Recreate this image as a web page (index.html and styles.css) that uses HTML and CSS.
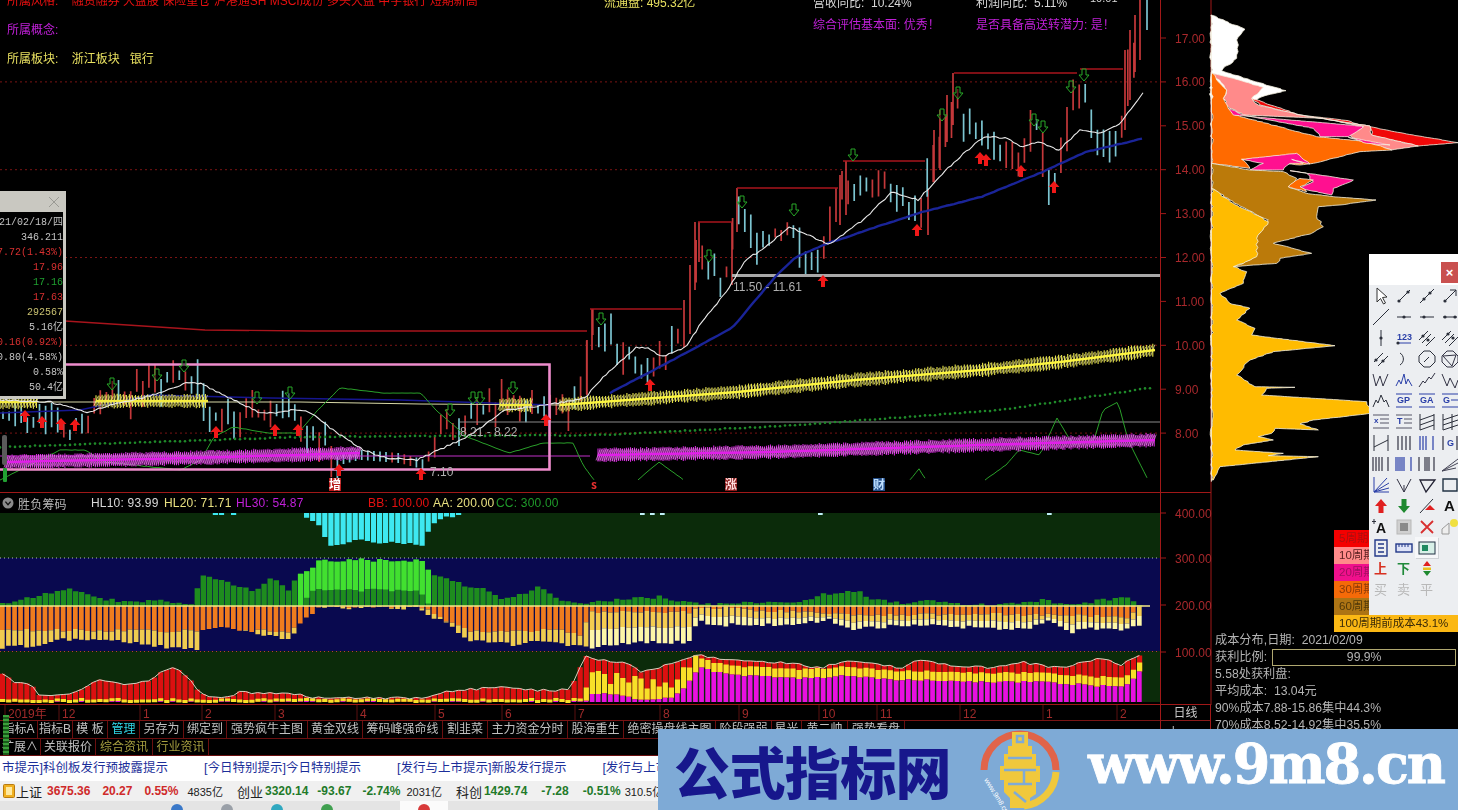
FILE: index.html
```html
<!DOCTYPE html>
<html lang="zh-CN">
<head>
<meta charset="utf-8">
<title>胜负筹码</title>
<link rel="stylesheet" href="styles.css">
</head>
<body>
<div class="screen">
  <div class="desk">
    <main class="charts">
      <section class="price-pane">
        <svg id="price" class="plot" width="1211" height="493"></svg>
        <div class="tags">
          <div class="tag red">所属风格:&nbsp;&nbsp;&nbsp;&nbsp;融资融券 大盘股 保险重仓 沪港通SH MSCI成份 多头大盘 中字银行 短期新高</div>
          <div class="tag purple">所属概念:</div>
          <div class="tag yellow">所属板块:&nbsp;&nbsp;&nbsp;&nbsp;浙江板块&nbsp;&nbsp;&nbsp;银行</div>
        </div>
        <div class="facts">
          <div class="yellow">流通盘: 495.32亿</div>
          <div class="white">营收同比: &nbsp;10.24%</div>
          <div class="white">利润同比: &nbsp;5.11%</div>
          <div class="white fact-up">10.01</div>
          <div></div>
          <div class="purple">综合评估基本面: 优秀！</div>
          <div class="purple">是否具备高送转潜力: 是！</div>
          <div></div>
        </div>
        <div class="quote">
          <div class="quote-title"><svg width="12" height="12" viewBox="0 0 12 12"><path d="M1 1L11 11M11 1L1 11" class="quote-x"/></svg></div>
          <div class="quote-body">
            <div>21/02/18/四</div>
            <div>346.211</div>
            <div class="q-red">7.72(1.43%)</div>
            <div class="q-red">17.96</div>
            <div class="q-green">17.16</div>
            <div class="q-red">17.63</div>
            <div class="q-yellow">292567</div>
            <div>5.16亿</div>
            <div class="q-red">0.16(0.92%)</div>
            <div>0.80(4.58%)</div>
            <div>0.58%</div>
            <div>50.4亿</div>
          </div>
        </div>
      </section>
      <section class="ind-pane">
        <div class="ind-head">
          <svg class="ind-dot" width="12" height="12" viewBox="0 0 12 12"><circle cx="6" cy="6" r="5.5" fill="#8a8a8a"/><path d="M3.4 4.6L6 7.6L8.6 4.6" fill="none" stroke="#111" stroke-width="1.4"/></svg>
          <span class="ind-name">胜负筹码</span>
          <span class="val w73 white">HL10: 93.99</span>
          <span class="val w72 yellow-l">HL20: 71.71</span>
          <span class="val w132 purple">HL30: 54.87</span>
          <span class="val w65 red">BB: 100.00</span>
          <span class="val w63 yellow-l">AA: 200.00</span>
          <span class="val green">CC: 300.00</span>
        </div>
        <svg id="ind" class="plot" width="1211" height="192"></svg>
      </section>
      <div class="foot">
        <div class="foot-main">
          <svg id="dates" class="plot" width="1160" height="16"></svg>
          <nav class="tabs">
            <span class="tab t38">指标A</span><span class="tab t35">指标B</span><span class="tab t35">模 板</span><span class="tab t32 cyan">管理</span><span class="tab t44">另存为</span><span class="tab t43">绑定到</span><span class="tab t81">强势疯牛主图</span><span class="tab t55">黄金双线</span><span class="tab t80">筹码峰强命线</span><span class="tab t45">割韭菜</span><span class="tab t80">主力资金分时</span><span class="tab t56">股海重生</span><span class="tab t92">绝密操盘线主图</span><span class="tab t56">阶段强弱</span><span class="tab t30">星光</span><span class="tab t46">黄二帅</span><span class="tab t57">强势看盘</span>
          </nav>
          <nav class="tabs">
            <span class="tab t41">扩展∧</span><span class="tab t55">关联报价</span><span class="tab t57 olive">综合资讯</span><span class="tab t56 olive">行业资讯</span>
          </nav>
        </div>
        <div class="foot-side">
          <div class="period">日线</div>
          <div class="zoom-btns"><span>十</span><span>一</span></div>
        </div>
      </div>
    </main>
    <aside class="side">
      <div class="chips">
        <svg id="chips" class="plot" width="247" height="632"></svg>
        <div class="legend">
          <div class="leg l1"><span class="leg-cut">5周期前成本</span></div>
          <div class="leg l2"><span class="leg-cut">10周期前成本</span></div>
          <div class="leg l3"><span class="leg-cut">20周期前成本</span></div>
          <div class="leg l4"><span class="leg-cut">30周期前成本</span></div>
          <div class="leg l5"><span class="leg-cut">60周期前成本</span></div>
          <div class="leg l6">100周期前成本43.1%</div>
        </div>
        <div class="tools">
          <div class="tools-bar"><div class="tools-close">×</div></div>
          <div id="toolgrid" class="tools-grid"></div>
        </div>
      </div>
      <div class="stats">
        <div>成本分布,日期: &nbsp;2021/02/09</div>
        <div class="profit"><span>获利比例:</span><span class="profit-box">99.9%</span></div>
        <div>5.58处获利盘:</div>
        <div>平均成本: &nbsp;13.04元</div>
        <div>90%成本7.88-15.86集中44.3%</div>
        <div>70%成本8.52-14.92集中35.5%</div>
      </div>
    </aside>
  </div>
  <div class="grip"></div>
  <div class="ticker">
    <span>市提示]科创板发行预披露提示</span>
    <span>[今日特别提示]今日特别提示</span>
    <span>[发行与上市提示]新股发行提示</span>
    <span>[发行与上市提示]新股发行提示</span>
  </div>
  <div class="indices">
    <svg class="idx-icon" width="12" height="14" viewBox="0 0 12 14"><rect x=".5" y=".5" width="11" height="13" rx="1" fill="#f0b020" stroke="#b87a10"/><rect x="3" y="3" width="6" height="8" fill="#ffe9a0"/></svg>
    <span class="name">上证</span>
    <b class="up m5">3675.36</b><b class="up m12">20.27</b><b class="up m12">0.55%</b><span class="amt m9">4835亿</span>
    <span class="name m14">创业</span>
    <b class="dn m2">3320.14</b><b class="dn m9">-93.67</b><b class="dn m11">-2.74%</b><span class="amt m6">2031亿</span>
    <span class="name m14">科创</span>
    <b class="dn m2">1429.74</b><b class="dn m14">-7.28</b><b class="dn m14">-0.51%</b><span class="amt m4">310.5亿</span>
  </div>
  <div class="taskbar">
    <span class="task-dot t-blue"></span><span class="task-dot t-grey"></span><span class="task-dot t-cyan"></span><span class="task-dot t-green"></span>
    <span class="task-white"><span class="task-dot t-red"></span></span>
  </div>
  <div class="banner">
    <div class="brand">公式指标网</div>
    <svg class="logo" width="80" height="80" viewBox="0 0 80 80">
      <path d="M4 40A36 36 0 0 1 76 40" fill="none" stroke="#e0644a" stroke-width="7"/>
      <path d="M76 42A36 36 0 0 1 44 76" fill="none" stroke="#f0c83c" stroke-width="7"/>
      <path d="M32 2H48V16H52V24H56V36H60V52H56V64L50 68V78H30V68L24 62V50H20V36H24V24H28V16H32Z" fill="#f0c83c"/>
      <path d="M37 6H43V12H37ZM28 28H52M24 40H56M28 54H52M34 62L46 72M44 40V54" fill="none" stroke="#7eaad6" stroke-width="2.5"/>
      <text x="0" y="0" transform="translate(4 50) rotate(58)" class="logo-url">www.9m8.cn</text>
    </svg>
    <div class="url">www.9m8.cn</div>
  </div>
</div>
<script src="script.js"></script>
</body>
</html>
```
FILE: styles.css
```css
* { box-sizing: border-box; }
html, body { margin: 0; padding: 0; background: #000; }
body { font-family: "Liberation Sans", "Noto Sans CJK SC", sans-serif; font-size: 12px; overflow: hidden; }
.screen { position: relative; width: 1458px; height: 810px; overflow: hidden; background: #000; display: flex; flex-direction: column; }
.desk { display: flex; height: 756px; flex: none; filter: blur(.35px); }
.charts { width: 1211px; flex: none; display: flex; flex-direction: column; }
.plot { display: block; overflow: visible; }
.price-pane { position: relative; height: 493px; flex: none; }
.red { color: #e81010; }
.purple { color: #c020d8; }
.yellow { color: #e8e060; }
.yellow-l { color: #e8e080; }
.white { color: #d8d8d8; }
.green { color: #1f9a2a; }
.cyan { color: #30d8e8; }
.olive { color: #a8a040; }

.tags { position: absolute; left: 7px; top: -13px; line-height: 29px; font-size: 12px; white-space: nowrap; }
.facts { position: absolute; left: 604px; top: -8px; display: grid; grid-template-columns: 209px 163px 114px 60px; grid-auto-rows: 22px; line-height: 22px; white-space: nowrap; }
.fact-up { margin-top: -5px; font-size: 11px; }

.quote { position: absolute; left: 0; top: 191px; width: 66px; height: 208px; background: #c9c8c1; padding: 0 3px 3px 0; display: flex; flex-direction: column; overflow: hidden; }
.quote-title { height: 21px; flex: none; display: flex; justify-content: flex-end; align-items: center; padding-right: 3px; }
.quote-x { fill: none; stroke: #9a9a94; stroke-width: 1; }
.quote-body { flex: 1; background: #000; display: flex; flex-direction: column; align-items: flex-end; font-family: "Liberation Mono", "Noto Sans CJK SC", monospace; font-size: 10px; line-height: 15px; color: #c4c4c4; white-space: nowrap; padding-top: 3px; }
.q-red { color: #d83030; }
.q-green { color: #1fa030; }
.q-yellow { color: #c8c070; }

.ind-pane { height: 212px; flex: none; display: flex; flex-direction: column; }
.ind-head { height: 20px; flex: none; display: flex; align-items: center; font-size: 12px; letter-spacing: .2px; white-space: nowrap; padding-left: 2px; }
.ind-dot { margin-right: 4px; }
.ind-name { width: 73px; color: #b8b8b8; }
.val { display: block; flex: none; }
.w73 { width: 73px; }
.w72 { width: 72px; }
.w132 { width: 132px; }
.w65 { width: 65px; }
.w63 { width: 63px; }

.foot { display: flex; flex: 1; min-height: 0; }
.foot-main { width: 1160px; flex: none; display: flex; flex-direction: column; }
.foot-side { flex: 1; border-left: 1px solid #a01818; border-right: 1px solid #a01818; }
.period { height: 16px; line-height: 16px; text-align: center; color: #c8c8c8; font-size: 12px; border-bottom: 1px solid #8c1a1a; }
.zoom-btns { display: flex; justify-content: space-around; color: #c8c8c8; font-size: 11px; line-height: 22px; }
.tabs { display: flex; height: 17.5px; flex: none; border-bottom: 1px solid #6a0f0f; font-size: 12px; line-height: 16px; color: #c0c0c0; white-space: nowrap; overflow: hidden; }
.tab { flex: none; text-align: center; border-right: 1px solid #6a0f0f; overflow: hidden; }
.tab.cyan { color: #30d8e8; }
.tab.olive { color: #a8a040; }
.t30 { width: 30px; } .t32 { width: 32px; } .t35 { width: 35px; } .t38 { width: 38px; } .t41 { width: 41px; }
.t43 { width: 43px; } .t44 { width: 44px; } .t45 { width: 45px; } .t46 { width: 46px; } .t55 { width: 55px; }
.t56 { width: 56px; } .t57 { width: 57px; } .t80 { width: 80px; } .t81 { width: 81px; } .t92 { width: 92px; }
.grip { position: absolute; left: 3px; top: 715px; width: 6px; height: 40px; background: repeating-linear-gradient(#3aa03a 0 2px, #1a5a1a 2px 4px); }

.side { width: 247px; flex: none; display: flex; flex-direction: column; }
.chips { position: relative; height: 632px; flex: none; }
.legend { position: absolute; right: 0; top: 530px; width: 124px; display: flex; flex-direction: column; font-size: 11.5px; }
.leg { height: 17px; line-height: 17px; padding-left: 5px; white-space: nowrap; overflow: hidden; }
.leg-cut { display: block; width: 30px; overflow: hidden; }
.l1 { background: #f40000; color: #a81010; }
.l2 { background: #ff8a8a; color: #5a2020; }
.l3 { background: #f0108c; color: #a01060; }
.l4 { background: #f56a08; color: #8a3a08; }
.l5 { background: #ad7414; color: #503808; }
.l6 { background: #fbb814; color: #3a2a08; }
.tools { position: absolute; left: 158px; top: 254px; width: 89px; height: 361px; background: #eceef1; overflow: hidden; }
.tools-bar { height: 31px; background: #fff; padding: 8px 0 0 72px; }
.tools-close { width: 17px; height: 21px; background: #c9504f; color: #fff; text-align: center; font-size: 13px; line-height: 21px; font-weight: bold; }
.tools-grid { display: grid; grid-template-columns: repeat(4, 23px); grid-auto-rows: 21px; width: 92px; }
.tool { display: flex; align-items: center; justify-content: center; font-size: 13px; line-height: 16px; }
.tool svg { display: block; }
.tool.sel { background: #f6f7f9; box-shadow: 1px 1px 0 #cfd2d6; }
.tool-up { color: #d83020; font-weight: bold; }
.tool-dn { color: #1f8a3a; font-weight: bold; }
.tool-off { color: #b8b8b8; }
.stats { flex: 1; padding: 0 0 0 4px; font-size: 12.2px; line-height: 17px; color: #b4b4b4; white-space: nowrap; overflow: hidden; display: flex; flex-direction: column; }
.profit { display: flex; align-items: center; }
.profit-box { margin-left: 5px; width: 184px; height: 17px; line-height: 15px; border: 1px solid #b0a870; text-align: center; }

.ticker { height: 25px; flex: none; background: #fff; color: #1c2f9a; font-size: 12.5px; line-height: 25px; display: flex; gap: 36px; padding-left: 2px; white-space: nowrap; overflow: hidden; }
.indices { height: 20px; flex: none; background: #f0f0f0; display: flex; align-items: center; white-space: nowrap; padding-left: 3px; font-size: 12px; overflow: hidden; }
.idx-icon { flex: none; margin-right: 1px; }
.name { color: #222; font-size: 13px; }
.up { color: #cf2a2a; }
.dn { color: #1f7a2a; }
.amt { color: #222; font-size: 11px; }
.m2 { margin-left: 2px; } .m4 { margin-left: 4px; } .m5 { margin-left: 5px; } .m6 { margin-left: 6px; } .m9 { margin-left: 9px; }
.m11 { margin-left: 11px; } .m12 { margin-left: 12px; } .m14 { margin-left: 14px; }
.taskbar { flex: 1; background: #e4e4e4; display: flex; gap: 38px; padding-left: 171px; padding-top: 3px; overflow: hidden; }
.task-dot { width: 12px; height: 12px; border-radius: 6px; flex: none; }
.task-white { width: 48px; margin-left: 29px; background: #fbfbfb; display: flex; justify-content: center; margin-top: -3px; padding-top: 3px; }
.t-blue { background: #3a78c8; } .t-grey { background: #9aa0a8; } .t-cyan { background: #30a8c0; } .t-green { background: #40a050; } .t-red { background: #d83a3a; }

.banner { position: absolute; left: 658px; top: 729px; width: 800px; height: 81px; background: #7eaad6; display: flex; align-items: center; overflow: hidden; }
.brand { margin-left: 16px; width: 306px; font-family: "Noto Sans CJK SC", sans-serif; font-weight: 900; font-size: 56px; line-height: 81px; color: #17178c; white-space: nowrap; letter-spacing: -.6px; }
.logo { flex: none; }
.logo-url { font-size: 7px; fill: #fff; font-family: "Liberation Sans", sans-serif; }
.url { margin: 0 0 12px 28px; font-family: "DejaVu Serif", serif; font-weight: bold; font-size: 54px; line-height: 60px; color: #fff; white-space: nowrap; letter-spacing: -2px; -webkit-text-stroke: .8px #fff; }

.axis-label { font-size: 12px; fill: #a8282c; font-family: "Liberation Sans", sans-serif; }
.date-label { font-size: 12px; fill: #a02a2a; font-family: "Liberation Sans", "Noto Sans CJK SC", sans-serif; }
.price-note { font-size: 12px; fill: #b0b0b0; font-family: "Liberation Sans", sans-serif; }
.sign { font-size: 12px; font-family: "Noto Sans CJK SC", sans-serif; font-weight: bold; }
.tool-text { font-family: "Liberation Sans", sans-serif; font-weight: bold; }
```
FILE: script.js
```js
(function () {
  var NS = 'http://www.w3.org/2000/svg';
  function el(parent, tag, attrs, text) {
    var n = document.createElementNS(NS, tag);
    for (var k in attrs) n.setAttribute(k, attrs[k]);
    if (text !== undefined) n.textContent = text;
    parent.appendChild(n);
    return n;
  }
  var seed = 20210218;
  function rnd() {
    seed = (seed + 0x6D2B79F5) | 0;
    var t = Math.imul(seed ^ (seed >>> 15), 1 | seed);
    t = (t + Math.imul(t ^ (t >>> 7), 61 | t)) ^ t;
    return ((t ^ (t >>> 14)) >>> 0) / 4294967296;
  }
  function at(pts, x) {
    if (x <= pts[0][0]) return pts[0][1];
    for (var i = 1; i < pts.length; i++) {
      if (x <= pts[i][0]) {
        var a = pts[i - 1], b = pts[i];
        return a[1] + (b[1] - a[1]) * (x - a[0]) / (b[0] - a[0]);
      }
    }
    return pts[pts.length - 1][1];
  }
  function poly(pts) { return 'M' + pts.map(function (p) { return p[0] + ' ' + p[1]; }).join('L'); }
  function smooth(pts, step, noise) {
    var out = [], n = noise === undefined ? .9 : noise;
    for (var x = pts[0][0]; x <= pts[pts.length - 1][0]; x += step) {
      out.push([x, +(at(pts, x) + (rnd() - .5) * n).toFixed(1)]);
    }
    return out;
  }
  var N = 188;
  function X(i) { return 3 + i * 6.08; }

  /* ---------- price pane ---------- */
  var s = document.getElementById('price');
  function Y(p) { return 38 + (17 - p) * 43.9; }
  [16, 14, 12, 10, 8].forEach(function (p) {
    el(s, 'path', { d: 'M0 ' + Y(p) + 'H1160', stroke: '#7a1414', 'stroke-dasharray': '2 3', fill: 'none' });
  });
  el(s, 'path', { d: 'M1160.5 0V493M1211 0V493M0 492.5H1211', stroke: '#a01818', fill: 'none' });
  [17, 16, 15, 14, 13, 12, 11, 10, 9, 8].forEach(function (p) {
    var y = Y(p);
    el(s, 'path', { d: 'M1160 ' + y + 'H1166', stroke: '#a01818' });
    el(s, 'text', { x: 1175, y: y + 4.5, 'class': 'axis-label' }, p.toFixed(2));
  });
  var pricePath = [[0, 412], [37, 420], [70, 430], [90, 420], [100, 395], [130, 392], [170, 380], [190, 372], [200, 405], [210, 420], [240, 415], [270, 410], [300, 420], [320, 440], [340, 460], [360, 455], [400, 458], [425, 465], [440, 430], [480, 410], [520, 400], [545, 410], [580, 400], [592, 330], [600, 330], [620, 350], [645, 375], [665, 360], [684, 335], [698, 250], [712, 270], [725, 285], [737, 215], [745, 220], [755, 235], [770, 240], [790, 225], [800, 255], [820, 262], [838, 200], [850, 185], [870, 190], [885, 180], [905, 200], [915, 215], [925, 205], [935, 150], [945, 120], [955, 100], [965, 120], [980, 145], [1000, 150], [1015, 165], [1025, 150], [1033, 115], [1045, 160], [1052, 195], [1065, 130], [1075, 100], [1085, 100], [1095, 130], [1110, 150], [1123, 125], [1130, 70], [1140, 40], [1146, 20]];
  var stepTop = [[0, 300], [587, 331], [590, 309], [682, 309], [698, 222], [732, 222], [737, 188], [838, 188], [843, 161], [925, 161], [954, 73], [1077, 73], [1080, 69], [1123, 69], [1140, 0], [1150, 0]];
  var redD = '', cyanD = '';
  for (var i = 0; i < N; i++) {
    var x = X(i), c = at(pricePath, x), prev = at(pricePath, x - 6.08);
    var up = c < prev; if (rnd() < .2) up = !up;
    var len = 6 + rnd() * 22 + Math.abs(c - prev) * .8, k = rnd();
    var t = Math.max(c - len * k, at(stepTop, x)), b = c + len * (1 - k);
    if (x > 340 && x < 430) { t = c - 5; b = c + 5; }
    var frag = 'M' + x.toFixed(1) + ' ' + Math.max(0, t).toFixed(1) + 'V' + b.toFixed(1);
    if (up) redD += frag; else cyanD += frag;
  }
  [[587, 340, 395], [592, 309, 350], [684, 300, 345], [690, 265, 310], [695, 222, 290], [699, 222, 262], [732, 222, 285], [737, 188, 232], [840, 175, 225], [846, 161, 215], [928, 190, 235], [934, 130, 182], [940, 110, 170], [947, 95, 142], [953, 73, 125], [1125, 50, 130], [1130, 30, 100], [1135, 15, 72], [1140, 0, 60]].forEach(function (b) {
    redD += 'M' + b[0] + ' ' + b[1] + 'V' + b[2];
  });
  el(s, 'path', { d: redD, stroke: '#c4383a', 'stroke-width': 1.7, fill: 'none' });
  el(s, 'path', { d: cyanD, stroke: '#7cc4d0', 'stroke-width': 1.7, fill: 'none' });
  el(s, 'path', { d: 'M1147 0V30', stroke: '#7cc4d0', 'stroke-width': 1.7 });

  function line(pts, color, w, extra) {
    var a = { d: poly(pts), stroke: color, 'stroke-width': w, fill: 'none', 'stroke-linejoin': 'round' };
    for (var k in extra || {}) a[k] = extra[k];
    return el(s, 'path', a);
  }
  // stepped resistance: flat runs only, the candles fill the rises between them
  [[[65, 321], [205, 330], [310, 331], [430, 331], [587, 331]], [[590, 309], [682, 309]], [[698, 222], [732, 222]], [[737, 188], [838, 188]], [[843, 161], [925, 161]], [[954, 73], [1077, 73]], [[1080, 69], [1123, 69]]].forEach(function (r) {
    line(r, '#a8141c', 1.4);
  });
  // thin guide lines
  line([[0, 402], [300, 402], [420, 404], [560, 405]], '#d8d8a8', 1);
  line([[0, 456], [590, 456]], '#c030c8', 1);
  line([[460, 422], [1160, 422]], '#8a8a8a', 1.2);
  line([[732, 275.5], [1160, 275.5]], '#a8a8a8', 3);
  // blue
  line([[0, 413], [80, 410], [150, 395], [270, 398], [400, 400], [550, 405]], '#161690', 1.6);
  line(smooth([[610, 393], [644, 375], [686, 353], [733, 327], [775, 277], [796, 257], [829, 243], [918, 213], [981, 197], [1040, 173], [1086, 152], [1145, 138]], 4, .6), '#1a2498', 2.4);
  // green dotted
  var dots = smooth([[0, 447], [300, 437], [600, 435], [800, 425], [1000, 410], [1150, 388]], 5);
  dots.forEach(function (p) { el(s, 'circle', { cx: p[0], cy: p[1], r: 1.3, fill: '#1f8a2a' }); });
  // oscillator
  var osc = [
    [[0, 480], [20, 470], [60, 450], [85, 450], [105, 462], [180, 470], [201, 460], [214, 437], [233, 427], [268, 433], [298, 433], [318, 410], [340, 388], [383, 393], [421, 393], [436, 410], [467, 437], [509, 453], [543, 443], [573, 443], [583, 465], [594, 480]],
    [[638, 480], [659, 462], [684, 480]],
    [[910, 480], [919, 469], [926, 480]],
    [[985, 480], [1006, 465], [1019, 450], [1040, 455], [1057, 418], [1073, 445], [1094, 440], [1103, 410], [1118, 402], [1128, 440], [1147, 478]]
  ];
  osc.forEach(function (o) { line(smooth(o, 3, .5), '#2aa02a', 1); });
  // bands of dense tick marks around a bright core
  function band(pts, color, core, pale, gap) {
    var x0 = pts[0][0], x1 = pts[pts.length - 1][0], d = '', d2 = '';
    for (var x = x0; x <= x1; x += gap) {
      var y = at(pts, x), h = 5.5 + rnd() * 2;
      d += 'M' + x.toFixed(1) + ' ' + (y - h).toFixed(1) + 'V' + (y + h).toFixed(1);
      d2 += 'M' + (x - 2).toFixed(1) + ' ' + (y + h - 1).toFixed(1) + 'L' + (x + 2).toFixed(1) + ' ' + (y - h + 1).toFixed(1);
    }
    el(s, 'path', { d: d, stroke: color, 'stroke-width': 1.1, fill: 'none' });
    el(s, 'path', { d: d2, stroke: pale, 'stroke-width': .7, fill: 'none' });
    line(pts, core, 2.6);
  }
  var yPath = [[560, 405], [737, 392], [855, 380], [981, 370], [1060, 362], [1155, 350]];
  var mPath = [[598, 455], [770, 452], [981, 445], [1155, 440]];
  band(yPath, '#e8e448', '#fbf440', '#fff6a0', 3.04);
  band([[96, 401], [208, 401]], '#e8e448', '#f4ec40', '#fff6a0', 3.04);
  band([[0, 402], [37, 402]], '#e8e448', '#f4ec40', '#fff6a0', 3.04);
  band([[500, 405], [532, 405]], '#e8e448', '#f4ec40', '#fff6a0', 3.04);
  band(mPath, '#d428dc', '#e020e8', '#f090f0', 2.03);
  band([[6, 462], [191, 458], [360, 453]], '#d428dc', '#e020e8', '#f090f0', 2.03);
  // white average and highlight box
  line(smooth([[0, 400], [50, 402], [88, 412], [111, 405], [153, 395], [187, 383], [199, 383], [230, 398], [260, 413], [275, 413], [291, 410], [310, 412], [333, 430], [363, 450], [386, 458], [417, 460], [432, 453], [467, 437], [505, 410], [547, 405], [585, 398], [602, 378], [636, 348], [648, 348], [661, 357], [686, 347], [703, 320], [728, 290], [745, 260], [762, 250], [789, 227], [812, 237], [829, 245], [863, 220], [892, 192], [918, 200], [939, 177], [964, 153], [985, 136], [1006, 138], [1023, 147], [1038, 142], [1059, 150], [1080, 130], [1103, 133], [1120, 123], [1145, 90]], 3, 1.8), '#e8e8e8', 1.1);
  el(s, 'path', { d: 'M0 364.5H549.5V469.5H0', fill: 'none', stroke: '#ee8ccc', 'stroke-width': 2.6 });
  // arrows
  [[25, 416], [42, 422], [61, 424], [75, 425], [216, 432], [275, 430], [298, 430], [339, 470], [421, 474], [546, 420], [650, 385], [823, 281], [917, 230], [980, 158], [986, 160], [1021, 171], [1054, 187]].forEach(function (p) {
    el(s, 'path', { transform: 'translate(' + p[0] + ' ' + p[1] + ')', d: 'M0 -6L5.5 0H2V6H-2V0H-5.5Z', fill: '#f01818' });
  });
  [[112, 384], [157, 375], [184, 366], [257, 398], [290, 393], [450, 410], [473, 398], [480, 398], [513, 388], [601, 319], [709, 256], [742, 202], [794, 210], [853, 155], [942, 115], [958, 93], [1034, 120], [1043, 127], [1071, 87], [1084, 75]].forEach(function (p) {
    el(s, 'path', { transform: 'translate(' + p[0] + ' ' + p[1] + ')', d: 'M-2 -6H2V0H5L0 6L-5 0H-2Z', fill: '#000', 'fill-opacity': .5, stroke: '#28a828', 'stroke-width': 1 });
  });
  // notes
  el(s, 'text', { x: 733, y: 291, 'class': 'price-note' }, '11.50 - 11.61');
  el(s, 'text', { x: 460, y: 436, 'class': 'price-note' }, '8.21 - 8.22');
  el(s, 'text', { x: 430, y: 476, 'class': 'price-note' }, '7.10');
  [['增', 335, '#fff', '#b81c1c'], ['s', 597, '#e83030', 'none'], ['涨', 731, '#ffdede', '#8a1c1c'], ['财', 879, '#bfe0ff', '#244e88']].forEach(function (g) {
    el(s, 'rect', { x: g[1] - 6, y: 478, width: 12, height: 13, fill: g[3] });
    el(s, 'text', { x: g[1] - 6, y: 489, 'class': 'sign', fill: g[2] }, g[0]);
  });
  // side grip
  el(s, 'rect', { x: 2, y: 435, width: 5, height: 30, fill: '#5a5a5a', rx: 2 });
  el(s, 'rect', { x: 3, y: 468, width: 4, height: 14, fill: '#22a032', rx: 1 });

  /* ---------- indicator pane ---------- */
  var svg = document.getElementById('ind');
  var g = el(svg, 'g', { transform: 'translate(0 -513)' });
  el(g, 'rect', { x: 0, y: 513, width: 1160, height: 45, fill: '#0b2b0a' });
  el(g, 'rect', { x: 0, y: 558, width: 1160, height: 93, fill: '#09094f' });
  el(g, 'rect', { x: 0, y: 651, width: 1160, height: 51, fill: '#0b2b0a' });
  var cyanTop = [[0, 513], [298, 513], [304, 517], [318, 525], [330, 545], [345, 545], [355, 540], [375, 542], [395, 542], [425, 545], [430, 525], [445, 518], [470, 513], [1150, 513]];
  var greenTop = [[0, 604], [30, 597], [70, 588], [100, 598], [130, 602], [160, 600], [195, 604], [199, 575], [225, 582], [240, 588], [260, 590], [270, 578], [290, 590], [295, 578], [310, 570], [320, 560], [420, 560], [430, 572], [450, 580], [470, 587], [490, 590], [498, 598], [520, 595], [540, 585], [560, 600], [585, 603], [600, 602], [612, 600], [640, 598], [660, 597], [700, 605], [740, 602], [780, 602], [810, 600], [820, 595], [845, 592], [860, 590], [870, 600], [900, 603], [930, 600], [960, 605], [1010, 604], [1040, 600], [1075, 605], [1100, 600], [1125, 597], [1140, 605], [1150, 606]];
  var lightTop = [[0, 606], [300, 606], [312, 590], [420, 590], [430, 606], [1150, 606]];
  var total = [[0, 648], [40, 645], [60, 640], [100, 640], [130, 642], [150, 645], [170, 648], [199, 649], [201, 630], [230, 628], [260, 635], [290, 638], [300, 625], [310, 615], [320, 608], [420, 608], [430, 615], [450, 625], [470, 640], [490, 643], [520, 645], [540, 640], [570, 645], [590, 648], [600, 645], [650, 642], [690, 642], [697, 621], [720, 625], [800, 624], [830, 620], [850, 630], [900, 625], [920, 625], [980, 628], [1000, 628], [1030, 628], [1050, 620], [1070, 632], [1100, 628], [1125, 630], [1140, 625], [1150, 625]];
  var orangeB = [[0, 630], [199, 631], [201, 629], [290, 632], [320, 607], [420, 607], [470, 632], [560, 630], [580, 635], [590, 612], [690, 612], [697, 607], [800, 612], [850, 615], [1000, 614], [1100, 616], [1130, 617], [1140, 607], [1150, 607]];
  var redTop = [[0, 673], [15, 682], [30, 685], [40, 695], [70, 695], [100, 680], [130, 685], [150, 680], [165, 670], [175, 668], [190, 680], [200, 695], [230, 697], [240, 692], [280, 694], [300, 695], [310, 698], [430, 698], [445, 692], [460, 690], [500, 687], [530, 690], [570, 690], [585, 655], [600, 660], [625, 662], [640, 672], [660, 667], [700, 655], [720, 660], [780, 662], [820, 668], [850, 660], [900, 668], [920, 660], [950, 665], [990, 668], [1020, 662], [1060, 668], [1100, 658], [1120, 665], [1140, 656], [1150, 656]];
  var magTop = [[0, 702], [585, 702], [590, 694], [620, 694], [640, 700], [670, 698], [680, 692], [700, 668], [730, 675], [800, 678], [850, 676], [900, 680], [1000, 682], [1040, 682], [1100, 686], [1125, 686], [1140, 672], [1150, 671]];
  var layers = {};
  function bar(col, x, y1, y2, w) {
    if (y2 - y1 < .3) return;
    var bw = w || 4.7;
    layers[col] = (layers[col] || '') + 'M' + x.toFixed(1) + ' ' + y1.toFixed(1) + 'h' + bw + 'V' + y2.toFixed(1) + 'h-' + bw + 'Z';
  }
  var redEdge = [];
  function j(a) { return (rnd() - .5) * a; }
  for (i = 0; i < N; i++) {
    var bx = X(i) - 3, mx = bx + 2.5;
    var cy = at(cyanTop, mx) + j(3);
    if (cy > 515) bar('#3ee8f0', bx, 513, cy, 5.2);
    else if (rnd() < .4 && ((mx > 198 && mx < 240) || (mx > 440 && mx < 470))) bar('#3ee8f0', bx, 513, 515, 5.2);
    var gt = at(greenTop, mx) + j(3.5);
    bar('#1e8c1e', bx, Math.min(gt, 606), 606, 5.4);
    var lt = at(lightTop, mx);
    if (lt < 606 && gt < lt) bar('#42e030', bx, gt, lt + j(3), 5.4);
    var tot = at(total, mx) + j(3.5), oe = Math.min(at(orangeB, mx) + j(3), tot);
    bar('#f07c1e', bx, 606, oe);
    if (mx > 590) {
      var ye = oe + (tot - oe) * .5;
      bar('#f4cc50', bx, oe, ye);
      bar('#fdf6a8', bx, ye, tot);
    } else bar('#f0cc50', bx, oe, tot);
    var rt = at(redTop, mx) + j(2.5), mg = Math.max(at(magTop, mx) + j(2), rt);
    redEdge.push([bx + 2.4, +rt.toFixed(1)]);
    bar('#dc1010', bx, rt, Math.min(mg, 702), 5.2);
    var want = mx > 697 ? 9 : (mx > 585 ? 10 + rnd() * 14 : 3);
    var yh = Math.min(want, mg - rt);
    bar('#f8e028', bx, Math.max(rt, mg - yh), mg, 5.2);
    if (mg < 702) bar('#e810e0', bx, mg, 702);
  }
  [640, 650, 660, 818, 1047].forEach(function (cx) { bar('#bfeff8', cx, 513, 515); });
  for (var col in layers) el(g, 'path', { d: layers[col], fill: col });
  el(g, 'path', { d: poly(redEdge), fill: 'none', stroke: '#d8d0c0', 'stroke-width': 1 });
  el(g, 'path', { d: 'M0 606H1150', stroke: '#f6e88a', 'stroke-width': 1.5 });
  el(g, 'path', { d: 'M0 558H1160', stroke: '#b8c0b8', 'stroke-dasharray': '1 3' });
  el(g, 'path', { d: 'M0 651.5H1160', stroke: '#b83a3a', 'stroke-dasharray': '1 3' });
  el(g, 'path', { d: 'M1160.5 493V705M1211 493V705M0 704.5H1211', stroke: '#a01818', fill: 'none' });
  [[400, 513], [300, 558], [200, 605], [100, 652]].forEach(function (a) {
    el(g, 'path', { d: 'M1160 ' + a[1] + 'H1166', stroke: '#a01818' });
    el(g, 'text', { x: 1175, y: a[1] + 4.5, 'class': 'axis-label' }, a[0].toFixed(2));
  });

  /* ---------- date axis ---------- */
  var d = document.getElementById('dates');
  el(d, 'path', { d: 'M1160.5 0V16', stroke: '#a01818' });
  [['2019年', 8], ['12', 62], ['1', 143], ['2', 205], ['3', 278], ['4', 360], ['5', 438], ['6', 505], ['7', 578], ['8', 663], ['9', 742], ['10', 822], ['11', 880], ['12', 963], ['1', 1046], ['2', 1120]].forEach(function (a) {
    el(d, 'path', { d: 'M' + (a[1] - 3) + ' 0V16', stroke: '#5a1010' });
    el(d, 'text', { x: a[1], y: 13, 'class': 'date-label' }, a[0]);
  });
  el(d, 'path', { d: 'M0 15.5H1160', stroke: '#7a1414' });

  /* ---------- chip distribution (drawn on a 3x grid) ---------- */
  var cs = document.getElementById('chips');
  var cg = el(cs, 'g', { transform: 'translate(-11 0) scale(.33333)' });
  // Break each long edge into small steps so the outline is jagged like a histogram.
  function jag(pts) {
    var out = [];
    for (var n = 0; n < pts.length; n++) {
      var a = pts[n], b = pts[(n + 1) % pts.length];
      out.push(a);
      var dist = Math.hypot(b[0] - a[0], b[1] - a[1]), cnt = Math.floor(dist / 9);
      for (var m = 1; m < cnt; m++) {
        var f = m / cnt;
        out.push([+(a[0] + (b[0] - a[0]) * f + j(9)).toFixed(1), +(a[1] + (b[1] - a[1]) * f).toFixed(1)]);
      }
    }
    return out;
  }
  function chip(pts, fill) {
    el(cg, 'path', { d: poly(jag(pts)) + 'Z', fill: fill, stroke: '#f4f0e0', 'stroke-width': 2.4, 'stroke-linejoin': 'round' });
  }
  chip([[33, 45], [135, 88], [110, 120], [115, 135], [110, 175], [70, 205], [65, 212], [150, 240], [258, 272], [195, 287], [170, 300], [160, 300], [33, 300]], '#ffffff');
  chip([[155, 295], [180, 315], [300, 345], [445, 362], [480, 375], [640, 405], [774, 428], [655, 438], [515, 405], [510, 378], [300, 345]], '#f00808');
  chip([[35, 218], [100, 235], [190, 262], [155, 295], [175, 315], [300, 345], [450, 370], [510, 378], [515, 405], [655, 438], [575, 450], [500, 430], [455, 412], [450, 405], [490, 380], [370, 355], [130, 345], [85, 320], [70, 295], [80, 270]], '#ff8a8a');
  chip([[35, 218], [80, 270], [70, 295], [85, 325], [105, 345], [350, 410], [500, 425], [575, 450], [480, 455], [340, 490], [300, 495], [125, 478], [150, 505], [35, 490]], '#ff6a00');
  chip([[85, 325], [100, 345], [270, 360], [450, 375], [490, 380], [445, 410], [360, 410], [340, 385], [130, 345]], '#ff1090');
  chip([[445, 412], [570, 435], [500, 430]], '#ff1090');
  chip([[125, 478], [290, 460], [330, 492], [275, 478], [310, 490], [270, 490], [250, 510], [150, 510], [190, 490]], '#ff1090');
  chip([[35, 490], [150, 510], [250, 515], [290, 535], [265, 560], [320, 580], [400, 590], [528, 600], [420, 615], [355, 620], [350, 650], [370, 680], [335, 700], [220, 730], [335, 760], [240, 775], [230, 790], [100, 800], [130, 790], [170, 765], [165, 720], [205, 660], [180, 650], [90, 600], [35, 565]], '#bb7a0a');
  chip([[270, 512], [460, 540], [400, 565], [395, 585], [300, 565], [340, 545], [320, 520]], '#ff1090');
  chip([[265, 560], [300, 535], [340, 540], [300, 560], [320, 575]], '#ff6a00');
  chip([[35, 565], [90, 605], [180, 650], [205, 665], [170, 715], [170, 770], [130, 790], [100, 800], [140, 815], [130, 850], [60, 880], [90, 910], [150, 925], [110, 960], [165, 985], [155, 1005], [405, 1037], [220, 1055], [150, 1080], [110, 1125], [165, 1160], [285, 1162], [200, 1165], [185, 1185], [500, 1205], [510, 1240], [430, 1250], [340, 1260], [300, 1272], [355, 1290], [225, 1285], [215, 1300], [175, 1310], [220, 1320], [130, 1335], [105, 1350], [250, 1360], [205, 1367], [355, 1370], [210, 1385], [60, 1400], [40, 1440], [35, 1440]], '#ffbb00');
  el(cg, 'path', { d: 'M34 45V1445', stroke: '#f4f0e0', 'stroke-width': 3 });

  /* ---------- drawing tools ---------- */
  var dk = '#2b2f3a', bl = '#2a3fa8';
  function L(d, c, w) { return '<path d="' + d + '" fill="none" stroke="' + (c || dk) + '" stroke-width="' + (w || 1) + '"/>'; }
  function D(x, y) { return '<circle cx="' + x + '" cy="' + y + '" r="1.6" fill="' + dk + '"/>'; }
  function T(x, y, t, c, sz) { return '<text class="tool-text" x="' + x + '" y="' + y + '" fill="' + (c || bl) + '" font-size="' + (sz || 9) + '">' + t + '</text>'; }
  var hatch = function (xs, c) { return xs.map(function (x) { return L('M' + x + ' 3V17', c, 1.2); }).join(''); };
  var icons = [
    '<path d="M6 2V16L9.5 12.5L12.5 18L14.5 17L11.5 11.5L16 11Z" fill="#fff" stroke="#333"/>',
    L('M4 16L16 4') + D(5, 15) + D(14, 6), L('M3 17L17 3') + D(7, 13) + D(13, 7), L('M4 16L16 4M10 4H16V10') + D(5, 15),
    L('M2 18L18 2'), L('M3 10H17') + D(10, 10), L('M3 10H17') + D(7, 10), L('M3 10H17') + D(5, 10) + D(15, 10),
    L('M10 2V18') + D(10, 10), T(3, 12, '123') + L('M3 15H17', bl) + D(4, 15), L('M2 12L11 3M5 15L14 6M9 18L18 9') + D(6, 8) + D(11, 12), L('M2 12L11 3M5 15L14 6M9 18L18 9') + D(8, 6) + D(13, 10),
    L('M3 13L12 4M7 17L17 7') + D(5, 11) + D(12, 12), L('M6 4A7 7 0 0 1 6 16'), L('M7 2H13L18 7V13L13 18H7L2 13V7Z') + L('M7 13L12 8'), L('M7 2H13L18 7V13L13 18H7L2 13V7ZM3 7L16 6L12 17Z', '#334'),
    L('M2 4L5 16L9 6L12 16L17 4', '#334'), L('M2 16L5 10L7 14L10 4L12 14L14 9L18 16', bl), L('M2 17L6 11L8 13L12 7L14 9L18 3', '#334'), L('M2 4L7 16L10 8L15 18L18 10', '#334'),
    L('M2 16L5 9L7 12L10 4L13 11L15 9L18 16', dk), T(3, 12, 'GP') + L('M2 3H18M2 16H18', bl, 1.2), T(3, 12, 'GA') + L('M2 3H18M2 16H18', bl, 1.2), T(3, 12, 'G') + L('M2 3H18M2 16H18M11 9H18', bl, 1.2),
    T(3, 11, 'x', bl, 8) + L('M2 3H18M9 7H18M9 11H18M2 16H18', '#556'), T(3, 12, 'T') + L('M2 3H18M10 7H18M10 11H18M2 16H18', '#556'), L('M3 2V18M17 2V18M3 8L17 3M3 13L17 8M3 18L17 13'), L('M3 2V18M12 2V18M3 8L18 3M3 13L18 8M3 18L18 13'),
    L('M3 2V18M17 2V18M3 14L17 7'), hatch([4, 8, 12, 16], '#334'), hatch([3, 6, 9, 16], bl), hatch([3, 17], '#334') + T(7, 13, 'G'),
    hatch([2, 5, 8, 11, 17], '#334'), hatch([2, 4, 6, 8, 10, 17], bl), hatch([2, 8, 10, 12, 17], '#334'), L('M2 17L18 5M2 17L18 9M2 17L16 14', '#445'),
    L('M3 2V17H18M3 17L16 3M3 17L18 8M3 17L18 13', bl), L('M3 4L10 17L17 4M10 10V17', '#334'), L('M3 5H18L9 17Z', '#223', 1.3), L('M3 4H17V16H3Z', '#234', 1.4),
    '<path d="M10 3L16 10H12.5V17H7.5V10H4Z" fill="#e02020"/>', '<path d="M10 17L16 10H12.5V3H7.5V10H4Z" fill="#1f8a30"/>', L('M3 17L16 3') + '<path d="M13 9L18 14H8Z" fill="#e02020"/>', T(4, 15, 'A', '#111', 15),
    T(5, 16, 'A', '#111', 14) + L('M3 2V7M1 4.5H5'), '<rect x="3" y="3" width="14" height="14" fill="#d0d0d0" stroke="#b8b8b8"/><rect x="6" y="6" width="8" height="8" fill="#8a8a8a"/>', L('M4 4L16 16M16 4L4 16', '#d83030', 1.8), '<path d="M2 12L9 6V17H2Z" fill="#eee" stroke="#999"/><circle cx="14" cy="6" r="4" fill="#f0e040"/>',
    L('M4 2H16V18H4ZM7 6H13M7 10H13M7 14H13', '#223888', 1.4), '<rect x="2" y="6" width="16" height="8" fill="#dfe4f8" stroke="#223888" stroke-width="1.4"/>' + L('M5 6V9M8 6V9M11 6V9M14 6V9', '#223888'), '<rect x="2" y="4" width="16" height="12" fill="#d8f0e8" stroke="#234"/><rect x="5" y="7" width="6" height="6" fill="#1f8a60"/>', '',
    '上', '下', '<path d="M10 2L14 7H6Z" fill="#e02020"/><rect x="6" y="8.5" width="8" height="2.5" fill="#e8c020"/><path d="M10 17L14 12H6Z" fill="#1f8a30"/>', '',
    '买', '卖', '平', ''
  ];
  var grid = document.getElementById('toolgrid');
  icons.forEach(function (ic, n) {
    var c = document.createElement('div');
    c.className = 'tool';
    if (ic === '上') c.classList.add('tool-up');
    else if (ic === '下') c.classList.add('tool-dn');
    else if (ic === '买' || ic === '卖' || ic === '平') c.classList.add('tool-off');
    if (ic.length === 1) c.textContent = ic;
    else if (ic) c.innerHTML = '<svg width="20" height="20" viewBox="0 0 20 20">' + ic + '</svg>';
    if (n === 50) c.classList.add('sel');
    grid.appendChild(c);
  });
})();
```
